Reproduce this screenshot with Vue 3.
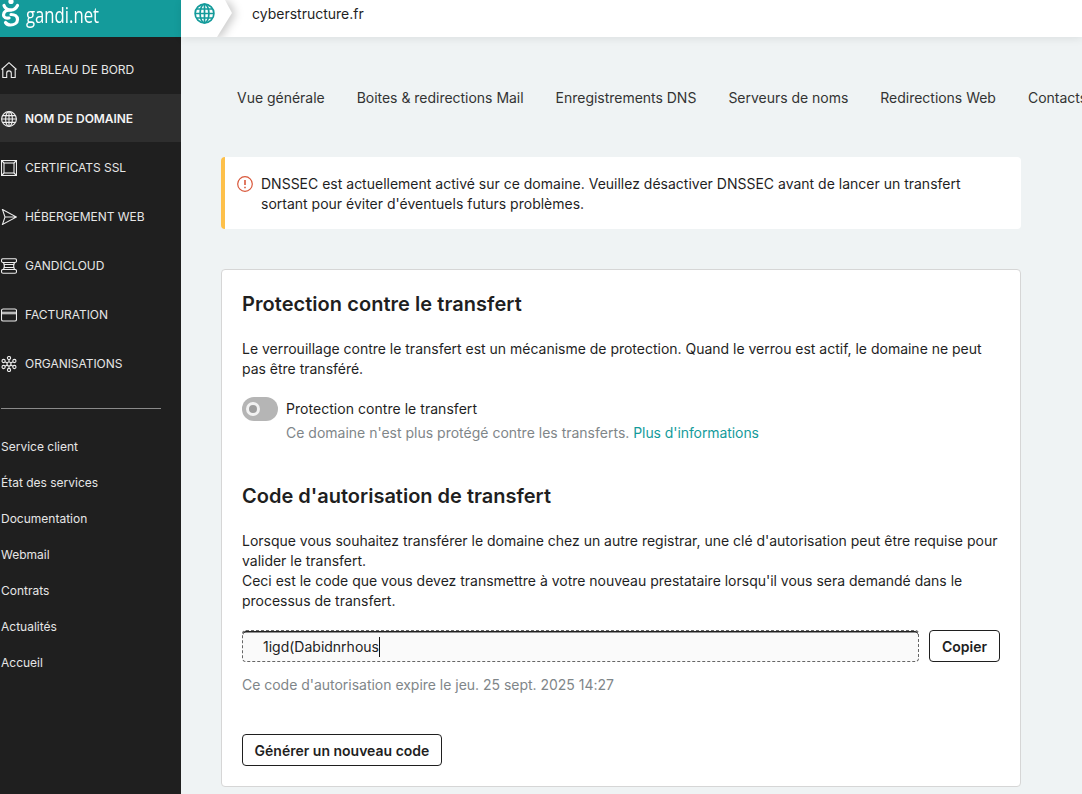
<script setup>
const tabs = ['Vue générale', 'Boites & redirections Mail', 'Enregistrements DNS', 'Serveurs de noms', 'Redirections Web', 'Contacts']
const links = ['Service client', 'État des services', 'Documentation', 'Webmail', 'Contrats', 'Actualités', 'Accueil']
</script>

<template>
  <div class="app">
    <aside class="sidebar">
      <div class="logo">
        <svg class="logo-mark" width="21" height="28" viewBox="0 0 21 28" fill="none" stroke="#fff" stroke-width="3.200" stroke-linecap="round">
          <circle cx="11" cy="1.500" r="2.600" fill="#fff" stroke="none" />
          <path d="M4 5.500c1 3 4 4.500 7 4.500s5-1.500 6.500-4.500" />
          <path d="M11 10c-5 0-7.500 2-7.500 5 0 2.500 2.500 3.500 5.500 3" />
          <path d="M11 14.500c4 0 6.500 2 6.500 5 0 3.500-3.500 5.500-7 5.500-2.500 0-4-1-5-2.500" />
        </svg>
        <span class="logo-text">gandi.net</span>
      </div>
      <nav class="nav">
        <a class="nav-item">
          <svg viewBox="0 0 16 16" class="nav-icon"><path d="M.5 7.500 8 .7l7.500 6.800M1.800 6.300v9.200h3.900v-4.300a2.300 2.300 0 0 1 4.600 0v4.300h3.900V6.300" /></svg>
          <span>TABLEAU DE BORD</span>
        </a>
        <a class="nav-item active">
          <svg viewBox="0 0 16 16" class="nav-icon"><circle cx="8" cy="8" r="7.400" /><ellipse cx="8" cy="8" rx="3.400" ry="7.400" /><path d="M8 .6v14.800M.6 8h14.800M1.600 4.600h12.800M1.600 11.400h12.800" /></svg>
          <span>NOM DE DOMAINE</span>
        </a>
        <a class="nav-item">
          <svg viewBox="0 0 16 16" class="nav-icon"><rect x=".5" y=".5" width="15" height="15" /><rect x="3" y="3" width="10" height="10" /><path d="M.5.500 3 3M15.500.500 13 3M.5 15.500 3 13M15.500 15.500 13 13" /></svg>
          <span>CERTIFICATS SSL</span>
        </a>
        <a class="nav-item">
          <svg viewBox="0 0 16 16" class="nav-icon"><path d="M1.500.600 15.500 8 1.500 15.400 4 8zM4 8h11.500" /></svg>
          <span>HÉBERGEMENT WEB</span>
        </a>
        <a class="nav-item">
          <svg viewBox="0 0 16 16" class="nav-icon"><rect x=".5" y=".8" width="15" height="3.700" rx="1.500" /><rect x=".5" y="11.500" width="15" height="3.700" rx="1.500" /><path d="M2.500 4.500c1 2 1 5 0 7M13.500 4.500c-1 2-1 5 0 7M2.500 6.500h11M2.500 9.500h11" /></svg>
          <span>GANDICLOUD</span>
        </a>
        <a class="nav-item">
          <svg viewBox="0 0 16 16" class="nav-icon"><rect x=".5" y="2" width="15" height="12" rx="1.600" /><path d="M.5 5.300h15M.5 6.700h15" /></svg>
          <span>FACTURATION</span>
        </a>
        <a class="nav-item">
          <svg viewBox="0 0 16 16" class="nav-icon"><circle cx="8" cy="8" r="2" /><circle cx="8" cy="2" r="1.600" /><circle cx="8" cy="14" r="1.600" /><circle cx="2.600" cy="5" r="1.600" /><circle cx="13.400" cy="5" r="1.600" /><circle cx="2.600" cy="11" r="1.600" /><circle cx="13.400" cy="11" r="1.600" /><path d="M8 3.600V6M8 10v2.400M4 5.800 6.300 7M12 5.800 9.700 7M4 10.200 6.300 9M12 10.200 9.700 9" /></svg>
          <span>ORGANISATIONS</span>
        </a>
      </nav>
      <hr class="divider" />
      <ul class="links">
        <li v-for="l in links" :key="l">{{ l }}</li>
      </ul>
    </aside>

    <div class="content">
      <header class="topbar">
        <div class="crumb-icon">
          <div class="crumb-wrap"><span class="crumb-shape"></span></div>
          <svg class="crumb-globe" width="21" height="21" viewBox="0 0 21 21" fill="none" stroke="#149b9b" stroke-width="1.700">
            <circle cx="10.500" cy="10.500" r="9.400" />
            <ellipse cx="10.500" cy="10.500" rx="4.400" ry="9.400" />
            <path d="M10.500 1.100v18.800M1.100 10.500h18.800M2.500 6h16M2.500 15h16" />
          </svg>
        </div>
        <span class="crumb-text">cyberstructure.fr</span>
      </header>

      <main class="main">
        <div class="tabs">
          <a v-for="t in tabs" :key="t" class="tab">{{ t }}</a>
        </div>

        <div class="alert">
          <svg class="alert-icon" width="16" height="16" viewBox="0 0 16 16" fill="none" stroke="#d9583b" stroke-width="1.200">
            <circle cx="8" cy="8" r="7.300" />
            <path d="M8 4v5" stroke-width="1.600" />
            <path d="M8 10.800v1.500" stroke-width="1.600" />
          </svg>
          <p>DNSSEC est actuellement activé sur ce domaine. Veuillez désactiver DNSSEC avant de lancer un transfert sortant pour éviter d'éventuels futurs problèmes.</p>
        </div>

        <section class="card">
          <h2>Protection contre le transfert</h2>
          <p class="para">Le verrouillage contre le transfert est un mécanisme de protection. Quand le verrou est actif, le domaine ne peut pas être transféré.</p>
          <div class="toggle-row">
            <span class="toggle"><span class="knob"></span></span>
            <div class="toggle-text">
              <div class="toggle-label">Protection contre le transfert</div>
              <div class="muted">Ce domaine n'est plus protégé contre les transferts. <a class="link">Plus d'informations</a></div>
            </div>
          </div>

          <h2 class="second">Code d'autorisation de transfert</h2>
          <p class="para">Lorsque vous souhaitez transférer le domaine chez un autre registrar, une clé d'autorisation peut être requise pour valider le transfert.<br />Ceci est le code que vous devez transmettre à votre nouveau prestataire lorsqu'il vous sera demandé dans le processus de transfert.</p>
          <div class="code-row">
            <div class="code-field"><span class="code-value">1igd(Dabidnrhous</span></div>
            <button class="btn copy">Copier</button>
          </div>
          <div class="muted expire">Ce code d'autorisation expire le jeu. 25 sept. 2025 14:27</div>
          <button class="btn generate">Générer un nouveau code</button>
        </section>
      </main>
    </div>
  </div>
</template>

<style>
html, body { margin: 0; overflow: hidden; }
</style>

<style scoped>
.app {
  display: grid;
  grid-template-columns: 181px 1fr;
  width: 1082px;
  height: 794px;
  overflow: hidden;
  font-family: Inter, "Liberation Sans", sans-serif;
  font-size: 14px;
  line-height: 20px;
  color: #1f1f1f;
  background: #eff3f4;
}
.sidebar { background: #1f1f1f; color: #e6e6e6; display: flex; flex-direction: column; }
.logo {
  height: 37px;
  background: #149b9b;
  display: flex;
  flex: none;
}
.logo-mark { flex: none; }
.logo-text {
  color: #fff;
  font-family: "Open Sans", sans-serif;
  font-size: 22px;
  font-weight: 500;
  line-height: 28px;
  margin-left: 5px;
  display: inline-block;
  transform: scaleX(.76);
  transform-origin: left center;
}
.nav { margin-top: 8px; display: flex; flex-direction: column; gap: 1px; }
.nav-item {
  height: 48px;
  box-sizing: border-box;
  padding: 2px 0 0 1px;
  display: flex;
  align-items: center;
  gap: 8px;
  font-size: 12px;
  letter-spacing: -.05px;
}
.nav-item.active { background: #2e2e2e; font-weight: 600; color: #f4f4f4; }
.nav-icon {
  width: 16px;
  height: 16px;
  flex: none;
  fill: none;
  stroke: #ededed;
  stroke-width: 1.100;
}
.divider {
  width: 160px;
  margin: 21px 0 0 1px;
  border: 0;
  border-top: 1px solid #8a8a8a;
}
.links {
  list-style: none;
  margin: 28px 0 0;
  padding: 0 0 0 1px;
  font-size: 12px;
  display: flex;
  flex-direction: column;
  gap: 16px;
}
.content { min-width: 0; display: flex; flex-direction: column; }
.topbar {
  height: 37px;
  flex: none;
  background: #fff;
  display: flex;
  align-items: flex-start;
  box-shadow: 0 2px 8px rgba(0, 0, 0, .08);
  font-size: 14px;
}
.crumb-icon {
  position: relative;
  width: 64px;
  height: 37px;
  flex: none;
  overflow: hidden;
}
.crumb-wrap {
  position: absolute;
  inset: 0;
  filter: drop-shadow(4px 1px 4px rgba(0, 0, 0, .2));
}
.crumb-shape {
  display: block;
  width: 100%;
  height: 100%;
  background: #fff;
  clip-path: polygon(0 0, 44px 0, 51px 13px, 36px 37px, 0 37px);
}
.crumb-globe { position: absolute; left: 13px; top: 3px; }
.crumb-text { margin: 4px 0 0 7px; }
.main { padding: 0 61px 0 40px; flex: 1; min-height: 0; }
.tabs {
  display: flex;
  gap: 32px;
  margin: 50px 0 0 16px;
  padding-top: 1px;
  height: 19px;
  white-space: nowrap;
  width: 900px;
  letter-spacing: -.02px;
}
.tab { color: #333; }
.alert {
  margin-top: 50px;
  height: 72px;
  box-sizing: border-box;
  background: #fff;
  border-left: 4px solid #fdc04a;
  border-radius: 4px;
  display: flex;
  gap: 8px;
  padding: 17px 40px 0 12px;
}
.alert-icon { flex: none; margin-top: 2px; }
.alert p { margin: 0; }
.card {
  margin-top: 40px;
  height: 518px;
  box-sizing: border-box;
  background: #fff;
  border: 1px solid #d6d6d6;
  border-radius: 4px;
  padding: 20px;
}
h2 { margin: 0; font-size: 20px; line-height: 28px; font-weight: 600; color: #1f1f1f; letter-spacing: .05px; }
.para { margin: 21px 0 0; letter-spacing: -.01px; }
.toggle-row { display: flex; gap: 8px; margin-top: 18px; }
.toggle {
  width: 36px;
  height: 24px;
  border-radius: 12px;
  background: #b5b5b5;
  flex: none;
  display: flex;
  align-items: center;
  padding-left: 4px;
  box-sizing: border-box;
}
.knob { width: 14px; height: 14px; box-sizing: border-box; border-radius: 50%; background: #9e9e9e; border: 3px solid #f2f2f2; }
.toggle-text { line-height: 24px; }
.toggle-label { letter-spacing: .04px; }
.muted { color: #7f8689; }
.link { color: #149b9b; letter-spacing: -.08px; }
h2.second { margin-top: 37px; letter-spacing: 0; }
.code-row { display: flex; gap: 10px; margin-top: 19px; align-items: stretch; }
.code-field {
  flex: 1;
  height: 32px;
  box-sizing: border-box;
  background: #fafafa;
  border: 1px dashed #666;
  box-shadow: inset 0 1.500px 0 #222;
  border-radius: 4px;
  padding: 6px 0 0 20px;
  color: #222;
}
.code-value { border-right: 1px solid #111; display: inline-block; line-height: 20px; }
.btn {
  font-family: inherit;
  font-size: 14px;
  font-weight: 600;
  line-height: 20px;
  color: #1f1f1f;
  background: #fff;
  border: 1px solid #1f1f1f;
  border-radius: 4px;
  box-sizing: border-box;
  padding: 1px 0 0;
}
.copy { width: 71px; height: 32px; flex: none; }
.expire { margin-top: 13px; letter-spacing: -.02px; }
.generate { display: block; width: 200px; height: 32px; margin-top: 39px; }
</style>
